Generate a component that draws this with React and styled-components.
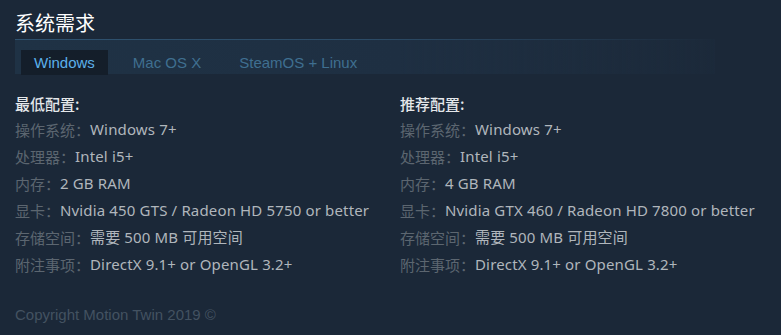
import React from "react";
import styled, { createGlobalStyle } from "styled-components";

const Global = createGlobalStyle`
  html, body { margin: 0; padding: 0; background: #1b2838; }
  body { font-family: "Noto Sans", "Noto Sans CJK SC", sans-serif; }
`;

const Page = styled.div`
  padding: 0 0 0 15px;
  width: 781px;
  height: 335px;
  box-sizing: border-box;
  overflow: hidden;
`;

const Title = styled.h2`
  margin: 10px 0 3px 0;
  font-family: "Noto Sans CJK SC", sans-serif;
  font-weight: 400;
  font-size: 20px;
  line-height: 26px;
  color: #ffffff;
`;

const TabBar = styled.div`
  display: flex;
  gap: 12px;
  width: 700px;
  height: 35px;
  box-sizing: border-box;
  padding: 10px 0 0 6px;
  border-top: 1px solid transparent;
  border-image: linear-gradient(to right, #2f526f 0%, #2c4b66 50%, rgba(44, 75, 102, 0) 100%) 1;
  background: linear-gradient(to right, #1f3245 0%, #1e2f42 55%, rgba(30, 47, 66, 0.2) 100%);
`;

const Tab = styled.div`
  padding: 0 13px;
  height: 25px;
  line-height: 25px;
  font-family: "Liberation Sans", Arial, sans-serif;
  font-size: 15px;
  color: ${(p) => (p.$active ? "#5cb0ea" : "#3f6f90")};
  background: ${(p) => (p.$active ? "#141e2a" : "transparent")};
`;

const Columns = styled.div`
  display: grid;
  grid-template-columns: 385px 1fr;
  margin-top: 17px;
`;

const Column = styled.div`
  display: flex;
  flex-direction: column;
`;

const Heading = styled.div`
  height: 25px;
  line-height: 25px;
  font-family: "Noto Sans CJK SC", sans-serif;
  font-size: 15px;
  font-weight: 500;
  color: #e4e7ea;
`;

const Row = styled.div`
  display: flex;
  align-items: center;
  height: 27px;
  white-space: nowrap;
`;

const Label = styled.span`
  font-family: "Noto Sans CJK SC", sans-serif;
  font-size: 15px;
  line-height: 27px;
  color: #5c6670;
`;

const Value = styled.span`
  font-size: 15px;
  line-height: 27px;
  letter-spacing: 0.15px;
  color: #b0b6bc;
`;

const Copyright = styled.div`
  margin-top: 27px;
  font-family: "Liberation Sans", Arial, sans-serif;
  font-size: 15px;
  line-height: 20px;
  color: #435261;
`;

const minimum = [
  ["操作系统：", "Windows 7+"],
  ["处理器：", "Intel i5+"],
  ["内存：", "2 GB RAM"],
  ["显卡：", "Nvidia 450 GTS / Radeon HD 5750 or better"],
  ["存储空间：", "需要 500 MB 可用空间"],
  ["附注事项：", "DirectX 9.1+ or OpenGL 3.2+"],
];

const recommended = [
  ["操作系统：", "Windows 7+"],
  ["处理器：", "Intel i5+"],
  ["内存：", "4 GB RAM"],
  ["显卡：", "Nvidia GTX 460 / Radeon HD 7800 or better"],
  ["存储空间：", "需要 500 MB 可用空间"],
  ["附注事项：", "DirectX 9.1+ or OpenGL 3.2+"],
];

function Spec({ title, rows }) {
  return (
    <Column>
      <Heading>{title}</Heading>
      {rows.map(([l, v]) => (
        <Row key={l}>
          <Label>{l}</Label>
          <Value>{v}</Value>
        </Row>
      ))}
    </Column>
  );
}

export default function App() {
  return (
    <Page>
      <Global />
      <Title>系统需求</Title>
      <TabBar>
        <Tab $active>Windows</Tab>
        <Tab>Mac OS X</Tab>
        <Tab>SteamOS + Linux</Tab>
      </TabBar>
      <Columns>
        <Spec title="最低配置:" rows={minimum} />
        <Spec title="推荐配置:" rows={recommended} />
      </Columns>
      <Copyright>Copyright Motion Twin 2019 ©</Copyright>
    </Page>
  );
}
